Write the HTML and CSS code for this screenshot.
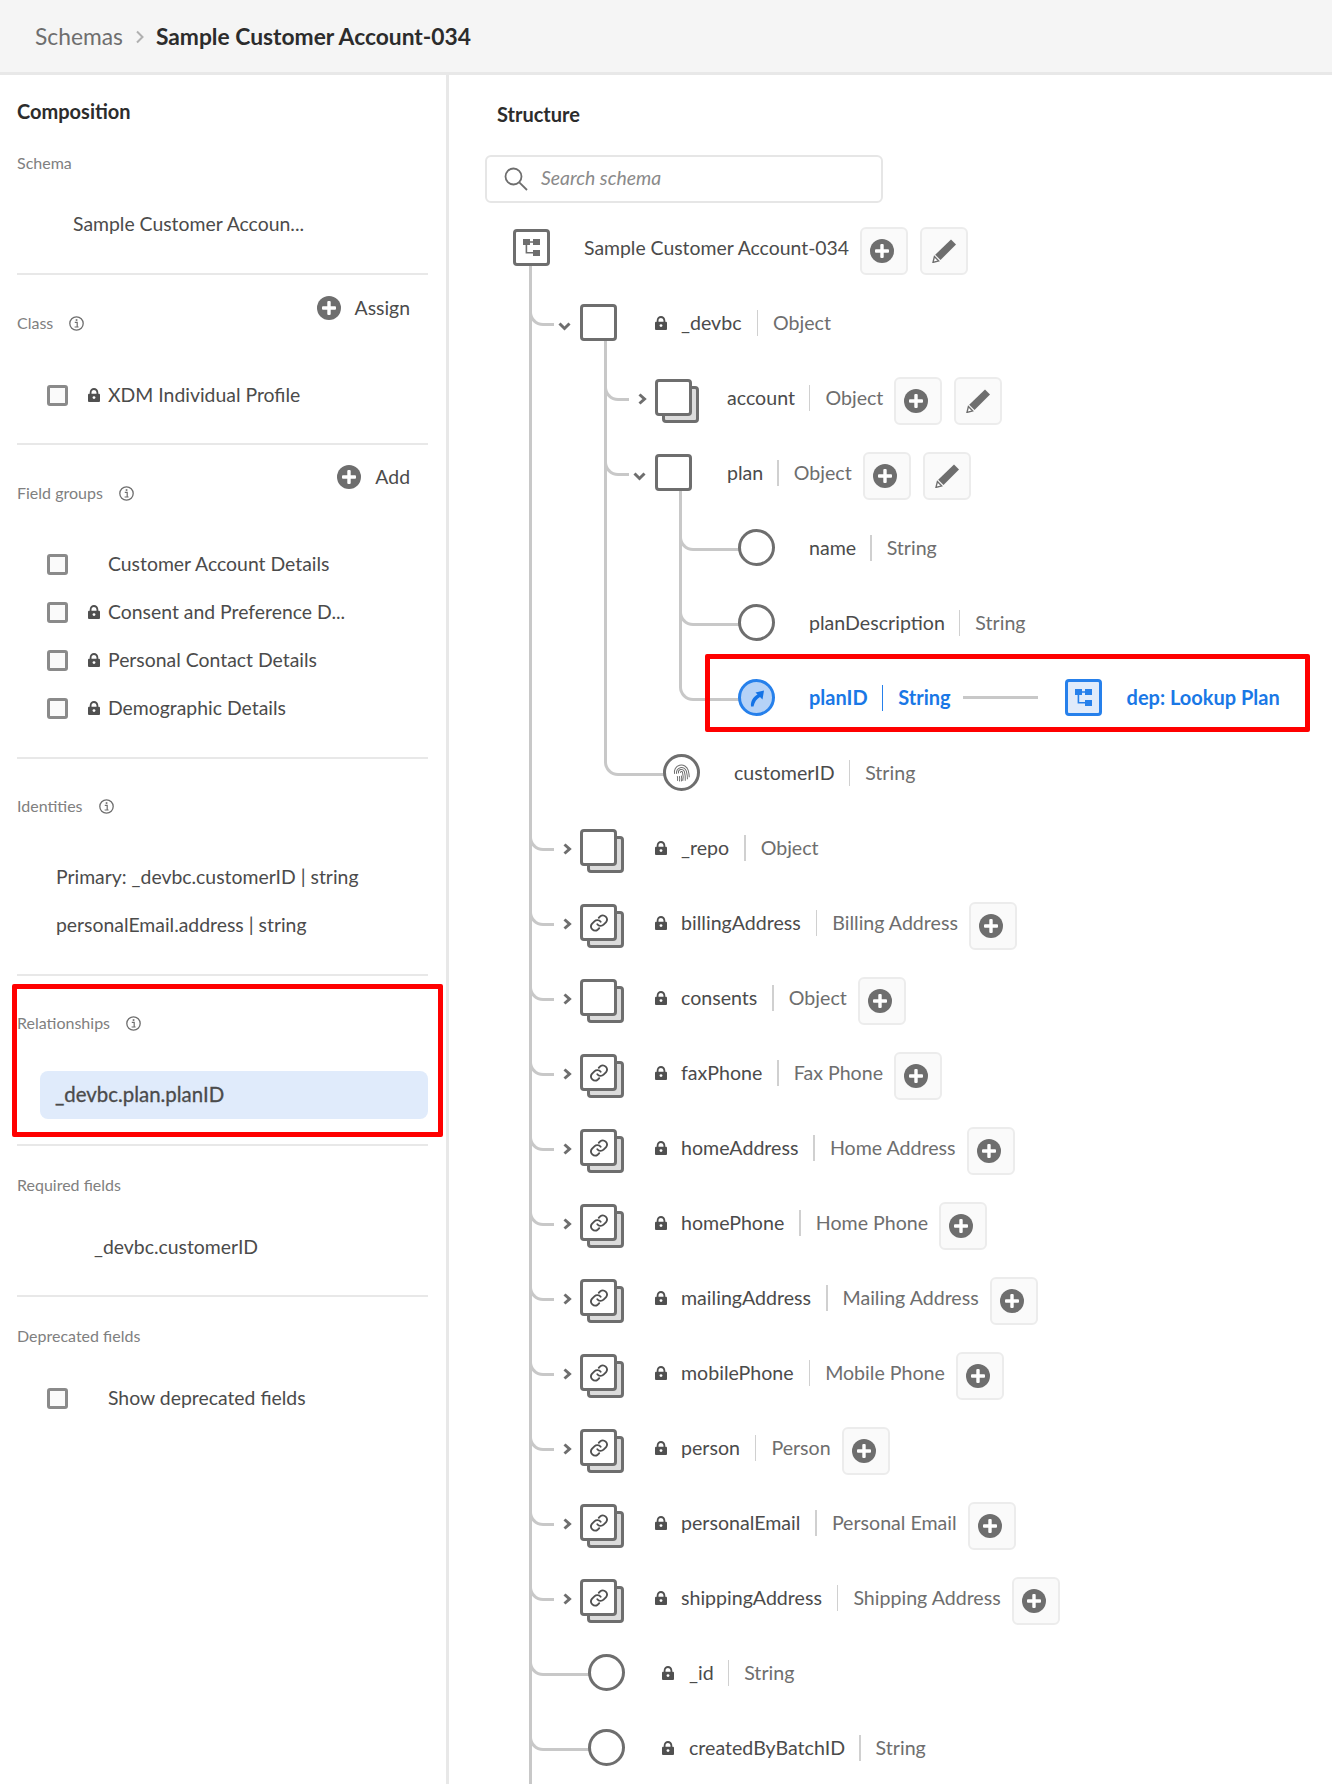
FILE: index.html
```html
<!DOCTYPE html>
<html lang="en">
<head>
    <meta charset="UTF-8">
    <meta name="viewport" content="width=device-width, initial-scale=1.0">
    <title>Sample Customer Account-034</title>
    <link rel="stylesheet" href="styles.css">
</head>
<body>
    <svg class="sprites" width="0" height="0">
        <symbol id="plus" viewBox="0 0 24 24"><circle cx="12" cy="12" r="12" fill="#6e6e6e"/><rect x="5" y="10.3" width="14" height="3.4" rx="1" fill="#fff"/><rect x="10.3" y="5" width="3.4" height="14" rx="1" fill="#fff"/></symbol>
        <symbol id="pencil" viewBox="0 0 24 24"><path d="M19 0.5l5 5L8.5 21 3.2 15.8z" fill="#6e6e6e"/><path d="M2.4 17.6l4.2 4.2-5.6 1.6z" fill="#fff" stroke="#6e6e6e" stroke-width="1.4"/></symbol>
        <symbol id="lock" viewBox="0 0 12 14"><path d="M2.6 6.5V4.4a3.4 3.4 0 0 1 6.8 0v2.1" fill="none" stroke="#505050" stroke-width="1.8"/><rect y="5.8" width="12" height="8.2" rx="1" fill="#505050"/><circle cx="6" cy="9.6" r="1.4" fill="#fff"/></symbol>
        <symbol id="info" viewBox="0 0 15 15"><circle cx="7.5" cy="7.5" r="6.7" fill="none" stroke="#6e6e6e" stroke-width="1.3"/><rect x="6.7" y="3.2" width="1.7" height="1.7" fill="#6e6e6e"/><path d="M5.8 6.4h2.4v4.4M5.6 11h4" fill="none" stroke="#6e6e6e" stroke-width="1.2"/></symbol>
        <symbol id="schema" viewBox="0 0 17 17"><rect width="7" height="6"/><rect x="10" width="7" height="6"/><rect x="10" y="11" width="7" height="6"/><path d="M7 3h3M3.400 6v7.800H10" fill="none" stroke="currentColor" stroke-width="1.600"/></symbol>
        <symbol id="link" viewBox="0 0 24 24"><path d="M10 13.500a5 5 0 0 0 7.500.5l3-3a5 5 0 0 0-7-7l-1.700 1.700M14 10.500a5 5 0 0 0-7.500-.5l-3 3a5 5 0 0 0 7 7l1.700-1.700" fill="none" stroke="#505050" stroke-width="2.200" stroke-linecap="round"/></symbol>
        <symbol id="right" viewBox="0 0 9 12"><path d="M1.500 1.500L6.500 6l-5 4.500" fill="none" stroke="#6e6e6e" stroke-width="3"/></symbol>
        <symbol id="down" viewBox="0 0 13 9"><path d="M1.500 1.500l5 5 5-5" fill="none" stroke="#6e6e6e" stroke-width="3"/></symbol>
    </svg>

    <div class="topbar">
        <span class="crumb">Schemas</span>
        <svg class="crumb-sep" width="8" height="14"><path d="M1 1.500L6.500 7 1 12.500" fill="none" stroke="#b0b0b0" stroke-width="2"/></svg>
        <span class="crumb-current">Sample Customer Account-034</span>
    </div>

    <div class="layout">
        <aside class="sidebar">
            <h2 class="panel-title">Composition</h2>
            <section class="block block-schema">
                <div class="label">Schema</div>
                <div class="value value-schema">Sample Customer Accoun...</div>
            </section>

            <section class="block block-action">
                <div class="block-head">
                    <div class="label">Class <svg class="info"><use href="#info"/></svg></div>
                    <div class="action"><svg class="plus-small"><use href="#plus"/></svg><span class="action-text">Assign</span></div>
                </div>
                <ul class="items">
                    <li class="item"><span class="check"></span><span class="slot"><svg class="lock"><use href="#lock"/></svg></span>XDM Individual Profile</li>
                </ul>
            </section>

            <section class="block block-action block-fields">
                <div class="block-head">
                    <div class="label">Field groups <svg class="info"><use href="#info"/></svg></div>
                    <div class="action"><svg class="plus-small"><use href="#plus"/></svg><span class="action-text">Add</span></div>
                </div>
                <ul class="items">
                    <li class="item"><span class="check"></span><span class="slot"></span>Customer Account Details</li>
                    <li class="item"><span class="check"></span><span class="slot"><svg class="lock"><use href="#lock"/></svg></span>Consent and Preference D...</li>
                    <li class="item"><span class="check"></span><span class="slot"><svg class="lock"><use href="#lock"/></svg></span>Personal Contact Details</li>
                    <li class="item"><span class="check"></span><span class="slot"><svg class="lock"><use href="#lock"/></svg></span>Demographic Details</li>
                </ul>
            </section>

            <section class="block block-plain">
                <div class="label">Identities <svg class="info"><use href="#info"/></svg></div>
                <ul class="items">
                    <li class="item item-identity">Primary: _devbc.customerID | string</li>
                    <li class="item item-identity">personalEmail.address | string</li>
                </ul>
            </section>

            <section class="block block-plain block-marked">
                <div class="label">Relationships <svg class="info"><use href="#info"/></svg></div>
                <div class="pill">_devbc.plan.planID</div>
                <div class="red-box"></div>
            </section>

            <section class="block block-tight">
                <div class="label">Required fields</div>
                <div class="item item-required">_devbc.customerID</div>
            </section>

            <section class="block block-tight block-last">
                <div class="label">Deprecated fields</div>
                <div class="item"><span class="check"></span><span class="slot"></span>Show deprecated fields</div>
            </section>
        </aside>

        <main class="structure">
            <h2 class="panel-title structure-title">Structure</h2>
            <div class="search">
                <svg width="24" height="24" viewBox="0 0 24 24"><circle cx="9.500" cy="9.500" r="8" fill="none" stroke="#6e6e6e" stroke-width="1.800"/><path d="M15.300 15.300L23 23" stroke="#6e6e6e" stroke-width="1.800"/></svg>
                <span class="search-text">Search schema</span>
            </div>

            <div class="row row-root">
                <span class="node"><svg class="schema-icon"><use href="#schema"/></svg></span>
                <span class="name">Sample Customer Account-034</span>
                <span class="btn btn-first"><svg class="btn-icon"><use href="#plus"/></svg></span>
                <span class="btn"><svg class="btn-icon"><use href="#pencil"/></svg></span>
            </div>

            <ul class="tree tree-root">
                <li>
                    <div class="row row-obj"><span class="chev chev-down"><svg width="13" height="9"><use href="#down"/></svg></span><span class="node"></span><svg class="lock"><use href="#lock"/></svg><span class="name">_devbc</span><span class="sep"></span><span class="type">Object</span></div>
                    <ul class="tree tree-devbc">
                        <li>
                            <div class="row row-obj"><span class="chev"><svg width="9" height="12"><use href="#right"/></svg></span><span class="node node-stack"></span><span class="name">account</span><span class="sep"></span><span class="type">Object</span><span class="btn btn-first"><svg class="btn-icon"><use href="#plus"/></svg></span><span class="btn"><svg class="btn-icon"><use href="#pencil"/></svg></span></div>
                        </li>
                        <li>
                            <div class="row row-obj"><span class="chev chev-down"><svg width="13" height="9"><use href="#down"/></svg></span><span class="node"></span><span class="name">plan</span><span class="sep"></span><span class="type">Object</span><span class="btn btn-first"><svg class="btn-icon"><use href="#plus"/></svg></span><span class="btn"><svg class="btn-icon"><use href="#pencil"/></svg></span></div>
                            <ul class="tree">
                                <li><div class="row row-field"><span class="node node-field"></span><span class="name">name</span><span class="sep"></span><span class="type">String</span></div></li>
                                <li><div class="row row-field"><span class="node node-field"></span><span class="name">planDescription</span><span class="sep"></span><span class="type">String</span></div></li>
                                <li>
                                    <div class="row row-field row-link">
                                        <span class="node node-field node-blue"><svg width="18" height="18" viewBox="0 0 18 18"><path d="M3 17.500C2.500 12 5 8 9.500 5.500L7.500 3.500 16 1.500 14.500 10.500 12 8C8.500 10 6.500 13 5.500 17.500z" fill="#1473e6"/></svg></span>
                                        <span class="name">planID</span><span class="sep sep-blue"></span><span class="type">String</span>
                                        <span class="link-line"></span>
                                        <span class="node node-blue-box"><svg class="schema-icon"><use href="#schema"/></svg></span>
                                        <span class="name">dep: Lookup Plan</span>
                                        <div class="red-box"></div>
                                    </div>
                                </li>
                            </ul>
                        </li>
                        <li><div class="row row-field"><span class="node node-field"><svg width="19" height="19" viewBox="0 0 19 19" fill="none" stroke="#6e6e6e" stroke-width="1"><g transform="rotate(-15 9.500 9.500)"><path d="M2.500 9a7 7 0 0 1 14 0c0 2.500 0 4.500-.7 7"/><path d="M4.500 9.500a5 5 0 0 1 10 0c0 3-.2 5.500-1 8"/><path d="M6.500 9.500a3 3 0 0 1 6 0c0 3.500-.4 6-1.500 9"/><path d="M8.500 9.500a1 1 0 0 1 2 0c0 3.500-.6 6-2 8.500"/><path d="M4.500 12c0 1.500-.3 3-1 4.500M6.500 12.500c0 2-.5 3.500-1.300 5M8.500 12.500c0 2-.5 4-1.500 5.500"/></g></svg></span><span class="name">customerID</span><span class="sep"></span><span class="type">String</span></div></li>
                    </ul>
                </li>
                <li><div class="row row-obj"><span class="chev"><svg width="9" height="12"><use href="#right"/></svg></span><span class="node node-stack"></span><svg class="lock"><use href="#lock"/></svg><span class="name">_repo</span><span class="sep"></span><span class="type">Object</span></div></li>
                <li><div class="row row-obj"><span class="chev"><svg width="9" height="12"><use href="#right"/></svg></span><span class="node node-stack"><svg class="link-icon"><use href="#link"/></svg></span><svg class="lock"><use href="#lock"/></svg><span class="name">billingAddress</span><span class="sep"></span><span class="type">Billing Address</span><span class="btn btn-first"><svg class="btn-icon"><use href="#plus"/></svg></span></div></li>
                <li><div class="row row-obj"><span class="chev"><svg width="9" height="12"><use href="#right"/></svg></span><span class="node node-stack"></span><svg class="lock"><use href="#lock"/></svg><span class="name">consents</span><span class="sep"></span><span class="type">Object</span><span class="btn btn-first"><svg class="btn-icon"><use href="#plus"/></svg></span></div></li>
                <li><div class="row row-obj"><span class="chev"><svg width="9" height="12"><use href="#right"/></svg></span><span class="node node-stack"><svg class="link-icon"><use href="#link"/></svg></span><svg class="lock"><use href="#lock"/></svg><span class="name">faxPhone</span><span class="sep"></span><span class="type">Fax Phone</span><span class="btn btn-first"><svg class="btn-icon"><use href="#plus"/></svg></span></div></li>
                <li><div class="row row-obj"><span class="chev"><svg width="9" height="12"><use href="#right"/></svg></span><span class="node node-stack"><svg class="link-icon"><use href="#link"/></svg></span><svg class="lock"><use href="#lock"/></svg><span class="name">homeAddress</span><span class="sep"></span><span class="type">Home Address</span><span class="btn btn-first"><svg class="btn-icon"><use href="#plus"/></svg></span></div></li>
                <li><div class="row row-obj"><span class="chev"><svg width="9" height="12"><use href="#right"/></svg></span><span class="node node-stack"><svg class="link-icon"><use href="#link"/></svg></span><svg class="lock"><use href="#lock"/></svg><span class="name">homePhone</span><span class="sep"></span><span class="type">Home Phone</span><span class="btn btn-first"><svg class="btn-icon"><use href="#plus"/></svg></span></div></li>
                <li><div class="row row-obj"><span class="chev"><svg width="9" height="12"><use href="#right"/></svg></span><span class="node node-stack"><svg class="link-icon"><use href="#link"/></svg></span><svg class="lock"><use href="#lock"/></svg><span class="name">mailingAddress</span><span class="sep"></span><span class="type">Mailing Address</span><span class="btn btn-first"><svg class="btn-icon"><use href="#plus"/></svg></span></div></li>
                <li><div class="row row-obj"><span class="chev"><svg width="9" height="12"><use href="#right"/></svg></span><span class="node node-stack"><svg class="link-icon"><use href="#link"/></svg></span><svg class="lock"><use href="#lock"/></svg><span class="name">mobilePhone</span><span class="sep"></span><span class="type">Mobile Phone</span><span class="btn btn-first"><svg class="btn-icon"><use href="#plus"/></svg></span></div></li>
                <li><div class="row row-obj"><span class="chev"><svg width="9" height="12"><use href="#right"/></svg></span><span class="node node-stack"><svg class="link-icon"><use href="#link"/></svg></span><svg class="lock"><use href="#lock"/></svg><span class="name">person</span><span class="sep"></span><span class="type">Person</span><span class="btn btn-first"><svg class="btn-icon"><use href="#plus"/></svg></span></div></li>
                <li><div class="row row-obj"><span class="chev"><svg width="9" height="12"><use href="#right"/></svg></span><span class="node node-stack"><svg class="link-icon"><use href="#link"/></svg></span><svg class="lock"><use href="#lock"/></svg><span class="name">personalEmail</span><span class="sep"></span><span class="type">Personal Email</span><span class="btn btn-first"><svg class="btn-icon"><use href="#plus"/></svg></span></div></li>
                <li><div class="row row-obj"><span class="chev"><svg width="9" height="12"><use href="#right"/></svg></span><span class="node node-stack"><svg class="link-icon"><use href="#link"/></svg></span><svg class="lock"><use href="#lock"/></svg><span class="name">shippingAddress</span><span class="sep"></span><span class="type">Shipping Address</span><span class="btn btn-first"><svg class="btn-icon"><use href="#plus"/></svg></span></div></li>
                <li><div class="row row-field"><span class="node node-field"></span><svg class="lock"><use href="#lock"/></svg><span class="name">_id</span><span class="sep"></span><span class="type">String</span></div></li>
                <li><div class="row row-field"><span class="node node-field"></span><svg class="lock"><use href="#lock"/></svg><span class="name">createdByBatchID</span><span class="sep"></span><span class="type">String</span></div></li>
            </ul>
        </main>
    </div>
</body>
</html>
```

FILE: styles.css
```css
*, *::before, *::after {
    padding: 0;
    margin: 0;
    box-sizing: border-box;
    font-family: Lato, "Open Sans", sans-serif;
}
html, body {
    height: 1784px;
    overflow: hidden;
}
body {
    background-color: white;
    color: #4b4b4b;
    font-size: 19.4px;
}
ul {
    list-style: none;
}
.sprites {
    position: absolute;
}

/* top bar */
.topbar {
    height: 75px;
    background-color: #f5f5f5;
    border-bottom: 3px solid #e8e8e8;
    padding-left: 35px;
    display: flex;
    align-items: center;
    font-size: 22.8px;
}
.crumb {
    color: #6e6e6e;
}
.crumb-sep {
    margin: 2px 12px 0 13px;
}
.crumb-current {
    color: #2c2c2c;
    font-weight: 700;
}
.layout {
    display: flex;
    height: 1709px;
}

/* left panel */
.sidebar {
    width: 449px;
    flex-shrink: 0;
    border-right: 3px solid #e8e8e8;
    padding: 23px 18px 0 17px;
}
.panel-title {
    font-size: 20px;
    line-height: 26px;
    font-weight: 700;
    color: #2c2c2c;
}
.block {
    border-bottom: 2px solid #e8e8e8;
}
.block-last {
    border-bottom: none;
}
.block-schema {
    padding: 27px 0 25px;
}
.block-action {
    padding: 21px 0 24px;
}
.block-fields {
    padding: 20px 0 25px;
}
.block-fields .label {
    margin-bottom: -1px;
}
.block-plain {
    padding: 35px 0 25px;
}
.block-tight {
    padding: 27px 0 24px;
}
.block-marked {
    position: relative;
}
.block-head {
    display: flex;
    justify-content: space-between;
    height: 39px;
}
.block-head .label {
    align-self: flex-end;
}
.label {
    font-size: 16px;
    line-height: 24px;
    color: #808080;
    display: flex;
    align-items: center;
}
.info {
    width: 15px;
    height: 15px;
    margin-left: 16px;
}
.action {
    height: 24px;
    display: flex;
    align-items: center;
    padding-right: 18px;
}
.action-text {
    padding-bottom: 2px;
}
.plus-small {
    width: 24px;
    height: 24px;
    margin-right: 14px;
}
.value-schema {
    margin-top: 25px;
    padding: 0 0 1px 56px;
    line-height: 47px;
}
.items {
    margin-top: 36px;
}
.item {
    height: 48px;
    display: flex;
    align-items: center;
    padding: 0 0 2px 30px;
}
.block-tight .item {
    margin-top: 26px;
}
.block-plain .items {
    margin-top: 35px;
}
.item-identity {
    padding-left: 39px;
}
.item-required {
    padding-left: 77px;
}
.check {
    width: 21px;
    height: 21px;
    border: 3px solid #8a8a8a;
    border-radius: 3px;
    background-color: #fafafa;
    margin: 2px 20px 0 0;
}
.slot {
    width: 20px;
    display: flex;
    align-items: center;
    padding-top: 2px;
}
.lock {
    width: 12px;
    height: 14px;
    flex-shrink: 0;
}
.pill {
    margin: 36px 0 0 23px;
    height: 48px;
    line-height: 46px;
    padding-left: 15px;
    background-color: #e0ebfb;
    border-radius: 8px;
    font-size: 20.4px;
    -webkit-text-stroke: 0.3px #4b4b4b;
}
.red-box {
    position: absolute;
    border: 5px solid #ff0000;
    border-radius: 2px;
}
.block-marked .red-box {
    top: 8px;
    bottom: 7px;
    left: -5px;
    right: -15px;
}

/* structure */
.structure {
    flex: 1;
    padding: 26px 0 0 36px;
}
.structure-title {
    margin-left: 12px;
}
.search {
    width: 398px;
    height: 48px;
    margin-top: 28px;
    border: 2px solid #e6e6e6;
    border-radius: 6px;
    display: flex;
    align-items: center;
    padding-left: 17px;
}
.search-text {
    margin: 0 0 3px 13px;
    font-style: italic;
    color: #8a8a8a;
}
.row {
    height: 75px;
    display: flex;
    align-items: center;
    position: relative;
    white-space: nowrap;
    font-size: 19.6px;
}
.row-root {
    margin-top: 7px;
    padding-left: 28px;
    font-size: 19.4px;
}
.row-obj {
    padding-left: 28px;
}
.row-field {
    padding-left: 58px;
}
.name, .type {
    padding-bottom: 1px;
}
.tree {
    position: relative;
    margin-left: 75px;
}
.tree::before {
    content: "";
    position: absolute;
    left: -1px;
    top: -19px;
    bottom: 52px;
    border-left: 3px solid #c8c8c8;
}
.tree-root {
    margin-left: 45px;
}
.tree-root::before {
    top: -19px;
    bottom: -60px;
}
.tree-devbc {
    margin-left: 75px;
}
.row-obj::before, .row-field::before {
    content: "";
    position: absolute;
    left: -1px;
    top: 14px;
    height: 27px;
    width: 25px;
    border-left: 3px solid #c8c8c8;
    border-bottom: 3px solid #c8c8c8;
    border-bottom-left-radius: 14px;
}
.row-field::before {
    width: 61px;
}
.chev {
    width: 14px;
    margin-right: 8px;
    display: flex;
    justify-content: flex-end;
    padding-top: 3px;
}
.chev-down {
    justify-content: flex-start;
    padding-top: 7px;
}
.node {
    width: 37px;
    height: 37px;
    flex-shrink: 0;
    border: 3px solid #6e6e6e;
    border-radius: 4px;
    background-color: white;
    margin-right: 34px;
    position: relative;
    display: flex;
    align-items: center;
    justify-content: center;
}
.row-obj > .node {
    margin-right: 35px;
}
/* two stacked boxes: back one, then front one, then the icon */
.node-stack {
    border: none;
    background: none;
}
.node-stack::before, .node-stack::after {
    content: "";
    position: absolute;
    width: 37px;
    height: 37px;
    border: 3px solid #6e6e6e;
    border-radius: 4px;
}
.node-stack::before {
    left: 7px;
    top: 7px;
    background-color: #dcdcdc;
}
.node-stack::after {
    left: 0;
    top: 0;
    background-color: white;
}
.node-stack svg {
    position: relative;
    z-index: 1;
}
.node-field {
    border-radius: 50%;
}
.schema-icon {
    width: 17px;
    height: 17px;
    fill: #6e6e6e;
    color: #6e6e6e;
}
.link-icon {
    width: 20px;
    height: 20px;
}
.row .lock {
    margin-left: 3px;
    margin-right: 15px;
}
.row-obj .lock {
    margin-left: 3px;
    margin-right: 14px;
}
.sep {
    width: 1.5px;
    height: 26px;
    background-color: #d0d0d0;
    margin: 0 15px 0 14px;
}
.row-obj .lock ~ .sep {
    margin-left: 15px;
}
.type {
    color: #6e6e6e;
}
.btn {
    width: 48px;
    height: 48px;
    flex-shrink: 0;
    margin: 6px 0 0 12px;
    border: 2px solid #ececec;
    border-radius: 6px;
    background-color: #fafafa;
    display: flex;
    align-items: center;
    justify-content: center;
}
.btn-first {
    margin-left: 11px;
}
.btn-icon {
    width: 24px;
    height: 24px;
}
.btn-first .btn-icon {
    margin-right: 4px;
}

/* planID row */
.row-link {
    font-size: 20px;
}
.row-link .name, .row-link .type {
    color: #1a78e6;
    font-weight: 700;
}
.node-blue {
    border-color: #2680eb;
    background-color: #b5d2f7;
}
.sep-blue {
    background-color: #2680eb;
}
.link-line {
    width: 75px;
    height: 3px;
    background-color: #c8c8c8;
    margin: 0 27px 0 12px;
}
.node-blue-box {
    border-color: #2680eb;
    background-color: #e0ebfb;
    margin-right: 25px;
}
.node-blue-box .schema-icon {
    fill: #2680eb;
    color: #2680eb;
}
.row-link .red-box {
    top: -6px;
    bottom: 3px;
    left: 25px;
    width: 605px;
}
```
